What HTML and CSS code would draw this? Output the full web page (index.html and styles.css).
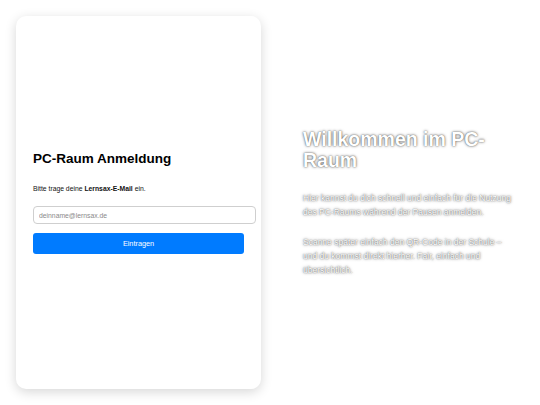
FILE: index.html
```html
<!DOCTYPE html>
<html lang="de">
<head>
<meta charset="utf-8">
<title>PC-Raum Anmeldung</title>
<link rel="stylesheet" href="styles.css">
</head>
<body>
<main class="layout">
  <section class="card">
    <h1 class="card-title">PC-Raum Anmeldung</h1>
    <p class="card-text">Bitte trage deine <strong>Lernsax-E-Mail</strong> ein.</p>
    <form class="form">
      <input class="email" type="email" placeholder="deinname@lernsax.de">
      <button class="submit" type="button">Eintragen</button>
    </form>
  </section>
  <section class="welcome">
    <h2 class="welcome-title">Willkommen im PC-Raum</h2>
    <p class="welcome-text">Hier kannst du dich schnell und einfach für die Nutzung des PC-Raums während der Pausen anmelden.</p>
    <p class="welcome-text">Scanne später einfach den QR-Code in der Schule – und du kommst direkt hierher. Fair, einfach und übersichtlich.</p>
  </section>
</main>
</body>
</html>
```

FILE: styles.css
```css
* { box-sizing: content-box; }
html, body {
  margin: 0;
  height: 100%;
  background: #ffffff;
  font-family: "Liberation Sans", Arial, sans-serif;
}
.layout {
  display: flex;
  align-items: stretch;
  height: 100%;
  padding: 16px;
  box-sizing: border-box;
  gap: 42px;
}
.card {
  width: 211px;
  padding: 0 17px;
  background: #fff;
  border-radius: 10px;
  box-shadow: 0 3px 12px rgba(0,0,0,0.16);
  display: flex;
  flex-direction: column;
  justify-content: center;
}
.card-title {
  margin: 0 0 18px;
  font-size: 13.5px;
  line-height: 16px;
  font-weight: bold;
  color: #000;
}
.card-text {
  margin: 0 0 13px;
  font-size: 6.8px;
  line-height: 8px;
  color: #111;
}
.form {
  display: flex;
  flex-direction: column;
  align-items: flex-start;
  gap: 9px;
}
.email {
  width: 100%;
  height: 8px;
  padding: 4px 5px;
  margin: 0;
  border: 1px solid #cfcfcf;
  border-radius: 4px;
  font-family: inherit;
  font-size: 6.8px;
  color: #333;
  background: #fff;
}
.email::placeholder { color: #8a8a8a; }
.submit {
  width: 100%;
  height: 21px;
  margin: 0;
  border: none;
  border-radius: 3px;
  background: #007bff;
  color: #fff;
  font-family: inherit;
  font-size: 7.3px;
  padding: 0;
}
.welcome {
  width: 211px;
  display: flex;
  flex-direction: column;
  justify-content: center;
  color: #fff;
  text-shadow: 0 0 3px rgba(0,0,0,0.6), 0 0 1px rgba(0,0,0,0.5);
}
.welcome-title {
  margin: 0 0 20px;
  font-size: 19.5px;
  line-height: 21px;
  font-weight: bold;
}
.welcome-text {
  margin: 0 0 16px;
  font-size: 8.5px;
  line-height: 14px;
}
.welcome-text:last-child { margin-bottom: 0; }
```
